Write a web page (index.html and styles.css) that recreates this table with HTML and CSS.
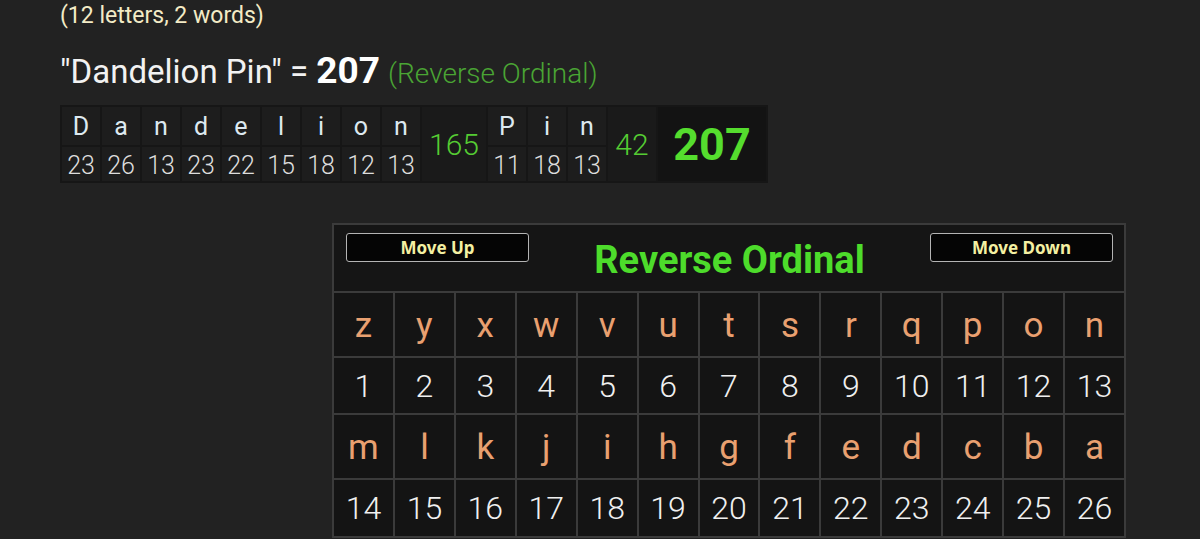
FILE: index.html
```html
<!DOCTYPE html>
<html lang="en">
<head>
  <meta charset="UTF-8">
  <meta name="viewport" content="width=device-width, initial-scale=1.0">
  <title>Dandelion Pin - Reverse Ordinal</title>
  <link rel="stylesheet" href="styles.css">
</head>
<body>
  <div class="page">
    <div class="count">(12 letters, 2 words)</div>

    <div class="phrase">
      "Dandelion Pin" = <span class="total">207</span> <span class="cipher-name">(Reverse Ordinal)</span>
    </div>

    <div class="breakdown">
      <div class="ch">D</div><div class="val">23</div>
      <div class="ch">a</div><div class="val">26</div>
      <div class="ch">n</div><div class="val">13</div>
      <div class="ch">d</div><div class="val">23</div>
      <div class="ch">e</div><div class="val">22</div>
      <div class="ch">l</div><div class="val">15</div>
      <div class="ch">i</div><div class="val">18</div>
      <div class="ch">o</div><div class="val">12</div>
      <div class="ch">n</div><div class="val">13</div>
      <div class="word-sum">165</div>
      <div class="ch">P</div><div class="val">11</div>
      <div class="ch">i</div><div class="val">18</div>
      <div class="ch">n</div><div class="val">13</div>
      <div class="word-sum">42</div>
      <div class="grand-sum">207</div>
    </div>

    <div class="cipher">
      <div class="cipher-head">
        <button class="move-btn up">Move Up</button>
        <div class="cipher-title">Reverse Ordinal</div>
        <button class="move-btn down">Move Down</button>
      </div>
      <div class="cl">z</div><div class="cl">y</div><div class="cl">x</div><div class="cl">w</div><div class="cl">v</div><div class="cl">u</div><div class="cl">t</div><div class="cl">s</div><div class="cl">r</div><div class="cl">q</div><div class="cl">p</div><div class="cl">o</div><div class="cl">n</div>
      <div class="cn">1</div><div class="cn">2</div><div class="cn">3</div><div class="cn">4</div><div class="cn">5</div><div class="cn">6</div><div class="cn">7</div><div class="cn">8</div><div class="cn">9</div><div class="cn">10</div><div class="cn">11</div><div class="cn">12</div><div class="cn">13</div>
      <div class="cl">m</div><div class="cl">l</div><div class="cl">k</div><div class="cl">j</div><div class="cl">i</div><div class="cl">h</div><div class="cl">g</div><div class="cl">f</div><div class="cl">e</div><div class="cl">d</div><div class="cl">c</div><div class="cl">b</div><div class="cl">a</div>
      <div class="cn">14</div><div class="cn">15</div><div class="cn">16</div><div class="cn">17</div><div class="cn">18</div><div class="cn">19</div><div class="cn">20</div><div class="cn">21</div><div class="cn">22</div><div class="cn">23</div><div class="cn">24</div><div class="cn">25</div><div class="cn">26</div>
    </div>
  </div>
</body>
</html>
```

FILE: styles.css
```css
body {
  margin: 0;
  background: #222222;
  font-family: Roboto, "Liberation Sans", sans-serif;
  color: #eeeeee;
}
.page {
  padding: 2px 0 0 60px;
}
.count {
  font-size: 23px;
  line-height: 27px;
  color: #f3ebc6;
}
.phrase {
  margin-top: 22px;
  font-size: 33px;
  line-height: 40px;
  color: #f2f2f2;
}
.total {
  font-size: 37px;
  font-weight: 700;
  color: #ffffff;
}
.cipher-name {
  font-size: 28px;
  font-weight: 300;
  color: #4aa534;
}

.breakdown {
  display: inline-grid;
  grid-auto-flow: column;
  grid-template-rows: 38px 34px;
  grid-template-columns: repeat(9, 38px) 64px repeat(3, 38px) 48px 108px;
  gap: 2px;
  padding: 2px;
  margin-top: 11px;
  background: #161616;
  vertical-align: top;
}
.breakdown > div {
  background: #1d1d1d;
  display: flex;
  align-items: center;
  justify-content: center;
}
.ch {
  font-size: 25px;
  color: #dde9f0;
}
.val {
  font-size: 25px;
  font-weight: 300;
  color: #dddddd;
  padding-top: 2px;
}
.word-sum {
  grid-row: span 2;
  font-size: 30px;
  font-weight: 300;
  color: #55cc33;
  background: #1a1a1a !important;
}
.breakdown > .grand-sum {
  grid-row: span 2;
  font-size: 45px;
  font-weight: 700;
  color: #55dd2e;
  background: #131313;
}

.cipher {
  display: grid;
  grid-template-columns: repeat(13, 1fr);
  grid-template-rows: 66px 63px 55px 63px 56px;
  gap: 2px;
  padding: 2px;
  width: 794px;
  box-sizing: border-box;
  margin: 40px 0 0 272px;
  background: #3b3b3b;
}
.cipher-head {
  grid-column: 1 / -1;
  background: #151515;
  display: grid;
  grid-template-columns: 183px 1fr 183px;
  padding: 8px 11px 0 12px;
}
.cipher-title {
  align-self: start;
  text-align: center;
  font-size: 38px;
  line-height: 44px;
  font-weight: 700;
  color: #4ddc2b;
  margin-top: 5px;
}
.move-btn {
  align-self: start;
  height: 29px;
  background: #050505;
  border: 1px solid #b4b4b4;
  border-radius: 3px;
  color: #f4f0a2;
  font-family: "Noto Sans", "Open Sans", sans-serif;
  font-size: 17px;
  font-weight: 700;
  padding: 0;
  cursor: pointer;
}
.cl, .cn {
  background: #141414;
  display: flex;
  align-items: center;
  justify-content: center;
}
.cl {
  font-size: 35px;
  color: #e9a070;
  padding-top: 1px;
}
.cn {
  font-size: 32px;
  font-weight: 300;
  color: #f0f0f0;
}
```
